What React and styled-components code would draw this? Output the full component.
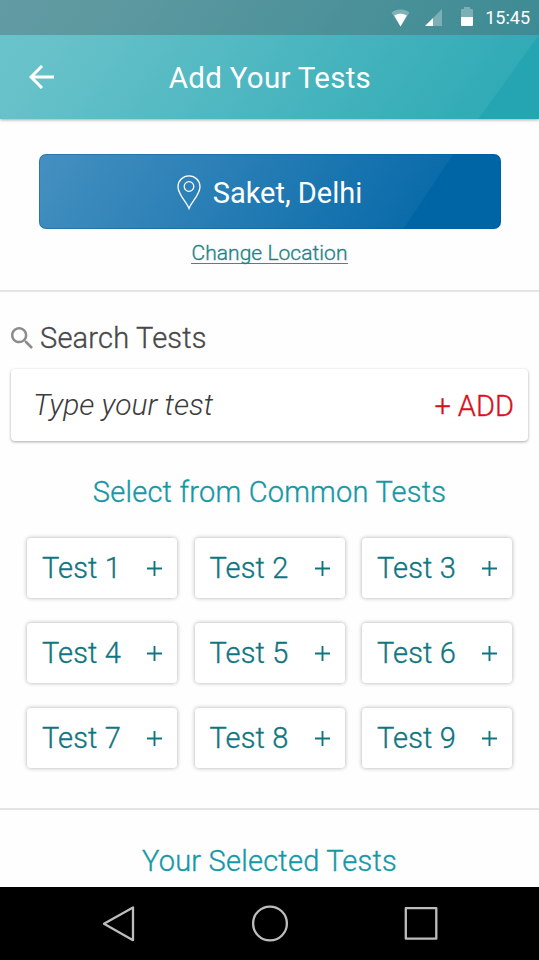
import React from "react";
import styled, { createGlobalStyle, css } from "styled-components";

const GlobalStyle = createGlobalStyle`
  * {
    box-sizing: border-box;
  }
  body {
    margin: 0;
    background: #fefefe;
    font-family: Roboto, "Liberation Sans", sans-serif;
  }
  button {
    font-family: inherit;
    margin: 0;
    padding: 0;
    border: none;
    background: none;
  }
`;

const tests = [1, 2, 3, 4, 5, 6, 7, 8, 9];

const StatusBar = () => (
  <StatusRow>
    <svg width="19" height="18" viewBox="0 0 18 18">
      <path d="M0 3.6C5 -0.6 13 -0.6 18 3.6L9 17.4Z" fill="#fff" opacity="0.3" />
      <path d="M2.7 6.6C6.5 4 11.5 4 15.3 6.6L9 17.4Z" fill="#fff" />
    </svg>
    <svg width="17" height="17" viewBox="0 0 17 17">
      <path d="M0 17L17 0V17Z" fill="#fff" opacity="0.3" />
      <path d="M0 17L8 9V17Z" fill="#fff" />
    </svg>
    <svg width="12" height="19" viewBox="0 0 12 19">
      <path d="M0 10V3Q0 2 1 2H3V0H9V2H11Q12 2 12 3V10Z" fill="#fff" opacity="0.3" />
      <path d="M0 10H12V18Q12 19 11 19H1Q0 19 0 18Z" fill="#fff" />
    </svg>
    <Clock>15:45</Clock>
  </StatusRow>
);

const TestButton = ({ name }) => (
  <TestCard>
    <span>{name}</span>
    <svg width="15" height="15" viewBox="0 0 15 15">
      <path d="M0 7.5H15M7.5 0V15" stroke="currentColor" strokeWidth="1.9" />
    </svg>
  </TestCard>
);

const NavBar = () => (
  <NavRow>
    <svg width="34" height="37" viewBox="0 0 34 37" {...navStroke}>
      <path d="M3 18.8L32 2.4V35.2Z" />
    </svg>
    <svg width="38" height="37" viewBox="0 0 38 37" {...navStroke}>
      <circle cx="19" cy="18.5" r="16.9" />
    </svg>
    <svg width="34" height="37" viewBox="0 0 34 37" {...navStroke}>
      <rect x="1.8" y="3.2" width="30.5" height="30.5" />
    </svg>
  </NavRow>
);

const navStroke = {
  fill: "none",
  stroke: "#bdbdbd",
  strokeWidth: 2.3,
  strokeLinejoin: "round",
};

const App = () => (
  <>
    <GlobalStyle />
    <Screen>
      <Header>
        <StatusBar />
        <TitleRow>
          <BackButton aria-label="Back">
            <svg width="25" height="24" viewBox="0 0 25 24" fill="none" stroke="#fff" strokeWidth="3">
              <path d="M13 1L2 12L13 23M2 12H25" />
            </svg>
          </BackButton>
          <Title>Add Your Tests</Title>
        </TitleRow>
      </Header>
      <Content>
        <LocationSection>
          <LocationButton>
            <svg width="24" height="35" viewBox="0 0 24 35" fill="none" stroke="#fff" strokeWidth="1.3">
              <path d="M12 33.5C9.5 27 1 19.5 1 11.7A11 10.9 0 0 1 23 11.7C23 19.5 14.5 27 12 33.5Z" />
              <circle cx="12" cy="11.5" r="4.8" />
            </svg>
            <span>Saket, Delhi</span>
          </LocationButton>
          <ChangeLink>Change Location</ChangeLink>
        </LocationSection>
        <SearchSection>
          <SearchLabel>
            <svg width="22" height="22" viewBox="3 3 17.5 17.5" fill="#8c8c8c">
              <path d="M15.5 14h-.79l-.28-.27C15.41 12.59 16 11.11 16 9.5 16 5.91 13.09 3 9.5 3S3 5.91 3 9.5 5.91 16 9.5 16c1.61 0 3.09-.59 4.23-1.57l.27.28v.79l5 4.99L20.49 19l-4.99-5zm-6 0C7.01 14 5 11.99 5 9.5S7.01 5 9.5 5 14 7.01 14 9.5 11.99 14 9.5 14z" />
            </svg>
            <span>Search Tests</span>
          </SearchLabel>
          <SearchBox>
            <Placeholder>Type your test</Placeholder>
            <AddButton>+ ADD</AddButton>
          </SearchBox>
          <SectionTitle>Select from Common Tests</SectionTitle>
          <TestGrid>
            {tests.map((n) => (
              <TestButton key={n} name={`Test ${n}`} />
            ))}
          </TestGrid>
        </SearchSection>
        <SelectedSection>
          <SectionTitle>Your Selected Tests</SectionTitle>
        </SelectedSection>
      </Content>
      <NavBar />
    </Screen>
  </>
);

export default App;

// a weight between light and regular
const bookWeight = css`
  font-weight: 300;
  -webkit-text-stroke: 0.35px currentColor;
`;

const Screen = styled.div`
  display: flex;
  flex-direction: column;
  width: 539px;
  height: 960px;
  overflow: hidden;
`;

const Header = styled.header`
  flex: none;
  height: 119px;
  color: #fff;
  background: linear-gradient(125.7deg, #6bc4cc 0%, #66c1c9 15%, #31abb6 90.2%, #24a5b1 90.4%);
  box-shadow: 0 1px 3px rgba(0, 0, 0, 0.35);
`;

const StatusRow = styled.div`
  display: flex;
  justify-content: flex-end;
  align-items: center;
  height: 35px;
  padding-right: 9px;
  background: rgba(84, 84, 88, 0.36);

  svg:nth-child(1) {
    margin-right: 15px;
  }
  svg:nth-child(2) {
    margin-right: 19px;
  }
  svg:nth-child(3) {
    margin-top: -3px;
  }
`;

const Clock = styled.span`
  margin-left: 12px;
  font-size: 18px;
  line-height: 35px;
`;

const TitleRow = styled.div`
  display: grid;
  grid-template-columns: 60px 1fr 60px;
  align-items: center;
  height: 84px;
`;

const BackButton = styled.button`
  display: flex;
  padding-left: 29px;
`;

const Title = styled.h1`
  margin: 0;
  padding: 2px 0 0 1px;
  font-size: 29.5px;
  font-weight: 400;
  line-height: 36px;
  letter-spacing: 0.28px;
  text-align: center;
`;

const Content = styled.main`
  flex: 1;
  overflow: hidden;
`;

const LocationSection = styled.section`
  display: flex;
  flex-direction: column;
  align-items: center;
  height: 173px;
  padding-top: 35px;
  border-bottom: 2px solid #e4e4e4;
`;

const LocationButton = styled.button`
  display: flex;
  align-items: center;
  justify-content: center;
  gap: 12px;
  width: 462px;
  height: 75px;
  padding-top: 2px;
  border: 1px solid rgba(0, 91, 160, 0.4);
  border-radius: 7px;
  color: #fff;
  font-size: 29px;
  background: linear-gradient(123.7deg, #4590c0 0%, #0b6caa 80.8%, #0065a5 81%) border-box;
`;

const ChangeLink = styled.a`
  ${bookWeight}
  margin-top: 15px;
  border-bottom: 1px solid #2c9292;
  color: #1c8484;
  font-size: 21px;
  line-height: 19px;
  letter-spacing: 0.05px;
`;

const SearchSection = styled.section`
  height: 518px;
  padding: 27px 11px 0;
  border-bottom: 2px solid #e4e4e4;
`;

const SearchLabel = styled.div`
  ${bookWeight}
  display: flex;
  align-items: center;
  gap: 7px;
  height: 38px;
  color: #484848;
  font-size: 29px;
  letter-spacing: 0.2px;
`;

const SearchBox = styled.div`
  display: flex;
  align-items: center;
  justify-content: space-between;
  height: 72px;
  margin-top: 12px;
  padding: 0 14px 0 22px;
  border-radius: 4px;
  background: #fff;
  box-shadow: 0 1px 3px rgba(0, 0, 0, 0.35);
`;

const Placeholder = styled.span`
  margin-top: -2px;
  color: #3c3c3c;
  font-size: 30px;
  font-style: italic;
  font-weight: 300;
`;

const AddButton = styled.button`
  ${bookWeight}
  padding-top: 1px;
  color: #d9101c;
  font-size: 29px;
`;

const SectionTitle = styled.h2`
  ${bookWeight}
  margin: 33px 0 0;
  color: #1598a6;
  font-size: 29px;
  line-height: 36px;
  letter-spacing: 0.22px;
  text-align: center;
`;

const TestGrid = styled.div`
  display: grid;
  grid-template-columns: repeat(3, 150px);
  grid-auto-rows: 60px;
  gap: 25px 17.5px;
  margin: 28px 0 0 16px;
`;

const TestCard = styled.button`
  ${bookWeight}
  display: flex;
  align-items: center;
  justify-content: space-between;
  padding: 0 15px;
  border-radius: 4px;
  color: #107580;
  background: #fff;
  box-shadow: 0 0 4px rgba(0, 0, 0, 0.32);
  font-size: 29px;
  letter-spacing: 0.15px;
`;

const SelectedSection = styled.section`
  ${SectionTitle} {
    margin-top: 33px;
  }
`;

const NavRow = styled.nav`
  display: flex;
  flex: none;
  align-items: center;
  justify-content: space-between;
  height: 73px;
  padding: 0 101px;
  background: #000;
`;
